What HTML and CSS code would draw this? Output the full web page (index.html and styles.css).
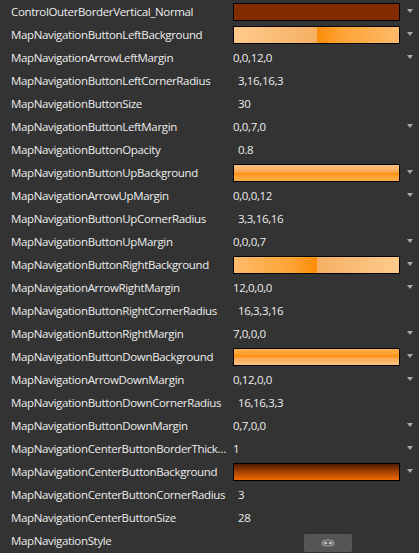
FILE: index.html
```html
<!DOCTYPE html>
<html>
<head>
<meta charset="utf-8">
<link rel="stylesheet" href="styles.css">
</head>
<body>
<div class="grid">
  <div class="row"><div class="label">ControlOuterBorderVertical_Normal</div><div class="swatch sw-border"></div><div class="arrow"></div></div>
  <div class="row"><div class="label">MapNavigationButtonLeftBackground</div><div class="swatch sw-left"></div><div class="arrow"></div></div>
  <div class="row"><div class="label">MapNavigationArrowLeftMargin</div><div class="value">0,0,12,0</div><div class="arrow"></div></div>
  <div class="row"><div class="label">MapNavigationButtonLeftCornerRadius</div><div class="value text">3,16,16,3</div><div></div></div>
  <div class="row"><div class="label">MapNavigationButtonSize</div><div class="value text">30</div><div></div></div>
  <div class="row"><div class="label">MapNavigationButtonLeftMargin</div><div class="value">0,0,7,0</div><div class="arrow"></div></div>
  <div class="row"><div class="label">MapNavigationButtonOpacity</div><div class="value text">0.8</div><div></div></div>
  <div class="row"><div class="label">MapNavigationButtonUpBackground</div><div class="swatch sw-up"></div><div class="arrow"></div></div>
  <div class="row"><div class="label">MapNavigationArrowUpMargin</div><div class="value">0,0,0,12</div><div class="arrow"></div></div>
  <div class="row"><div class="label">MapNavigationButtonUpCornerRadius</div><div class="value text">3,3,16,16</div><div></div></div>
  <div class="row"><div class="label">MapNavigationButtonUpMargin</div><div class="value">0,0,0,7</div><div class="arrow"></div></div>
  <div class="row"><div class="label">MapNavigationButtonRightBackground</div><div class="swatch sw-right"></div><div class="arrow"></div></div>
  <div class="row"><div class="label">MapNavigationArrowRightMargin</div><div class="value">12,0,0,0</div><div class="arrow"></div></div>
  <div class="row"><div class="label">MapNavigationButtonRightCornerRadius</div><div class="value text">16,3,3,16</div><div></div></div>
  <div class="row"><div class="label">MapNavigationButtonRightMargin</div><div class="value">7,0,0,0</div><div class="arrow"></div></div>
  <div class="row"><div class="label">MapNavigationButtonDownBackground</div><div class="swatch sw-down"></div><div class="arrow"></div></div>
  <div class="row"><div class="label">MapNavigationArrowDownMargin</div><div class="value">0,12,0,0</div><div class="arrow"></div></div>
  <div class="row"><div class="label">MapNavigationButtonDownCornerRadius</div><div class="value text">16,16,3,3</div><div></div></div>
  <div class="row"><div class="label">MapNavigationButtonDownMargin</div><div class="value">0,7,0,0</div><div class="arrow"></div></div>
  <div class="row"><div class="label">MapNavigationCenterButtonBorderThickness</div><div class="value">1</div><div class="arrow"></div></div>
  <div class="row"><div class="label">MapNavigationCenterButtonBackground</div><div class="swatch sw-center"></div><div class="arrow"></div></div>
  <div class="row"><div class="label">MapNavigationCenterButtonCornerRadius</div><div class="value text">3</div><div></div></div>
  <div class="row"><div class="label">MapNavigationCenterButtonSize</div><div class="value text">28</div><div></div></div>
  <div class="row"><div class="label">MapNavigationStyle</div><div class="value"><div class="btn"><svg width="14" height="8" viewBox="0 0 14 8"><rect x="0.5" y="0.5" width="13" height="7" rx="3.5" fill="#8a8a8a" stroke="#6a6a6a"/><rect x="4" y="2" width="6" height="4" rx="1" fill="#5a5a5a"/><circle cx="5" cy="4" r="1.3" fill="#c8c8c8"/><circle cx="9" cy="4" r="1.3" fill="#c8c8c8"/></svg></div></div><div></div></div>
</div>
</body>
</html>
```
FILE: styles.css
```css
html, body {
  margin: 0;
  padding: 0;
  background: #333333;
}
body {
  width: 419px;
  height: 553px;
  overflow: hidden;
  font-family: "Open Sans", "Noto Sans", sans-serif;
  font-size: 11.5px;
  letter-spacing: -0.34px;
  color: #ededed;
}
.grid {
  display: flex;
  flex-direction: column;
}
.row {
  display: grid;
  grid-template-columns: 218px 167px 19px;
  column-gap: 4px;
  height: 23px;
  flex: none;
  align-items: center;
  padding-left: 11px;
}
.label {
  white-space: nowrap;
  overflow: hidden;
  text-overflow: ellipsis;
}
.value {
  white-space: nowrap;
}
.value.text {
  padding-left: 5px;
}
.swatch {
  height: 16px;
  border: 1px solid #000;
}
.sw-border { background: #822c00; }
.sw-left {
  background: linear-gradient(to right, #fdca8c 0%, #f6b064 50%, #fe8c06 50%, #fea334 65%, #fdba6c 100%);
}
.sw-right {
  background: linear-gradient(to right, #fdba6c 0%, #fea334 35%, #fe8c06 50%, #f6b064 50%, #fdca8c 100%);
}
.sw-up {
  background: linear-gradient(to bottom, #fcc183 0%, #f8aa52 45%, #fe8d08 50%, #fea030 70%, #fdae4e 100%);
}
.sw-down {
  background: linear-gradient(to bottom, #fdae4e 0%, #fea030 30%, #fe8d08 50%, #f8aa52 55%, #fcc183 100%);
}
.sw-center {
  background: linear-gradient(to bottom, #4e1c00 0%, #a84400 50%, #f26a00 100%);
}
.arrow {
  justify-self: start;
  margin-left: 3px;
  width: 0;
  height: 0;
  border-left: 3.5px solid transparent;
  border-right: 3.5px solid transparent;
  border-top: 4px solid #a8a8a8;
  margin-top: -1px;
}
.btn {
  margin-left: 71px;
  width: 48px;
  height: 18px;
  background: #555555;
  border-radius: 2px;
  display: flex;
  align-items: center;
  justify-content: center;
  margin-top: 4px;
}
```
